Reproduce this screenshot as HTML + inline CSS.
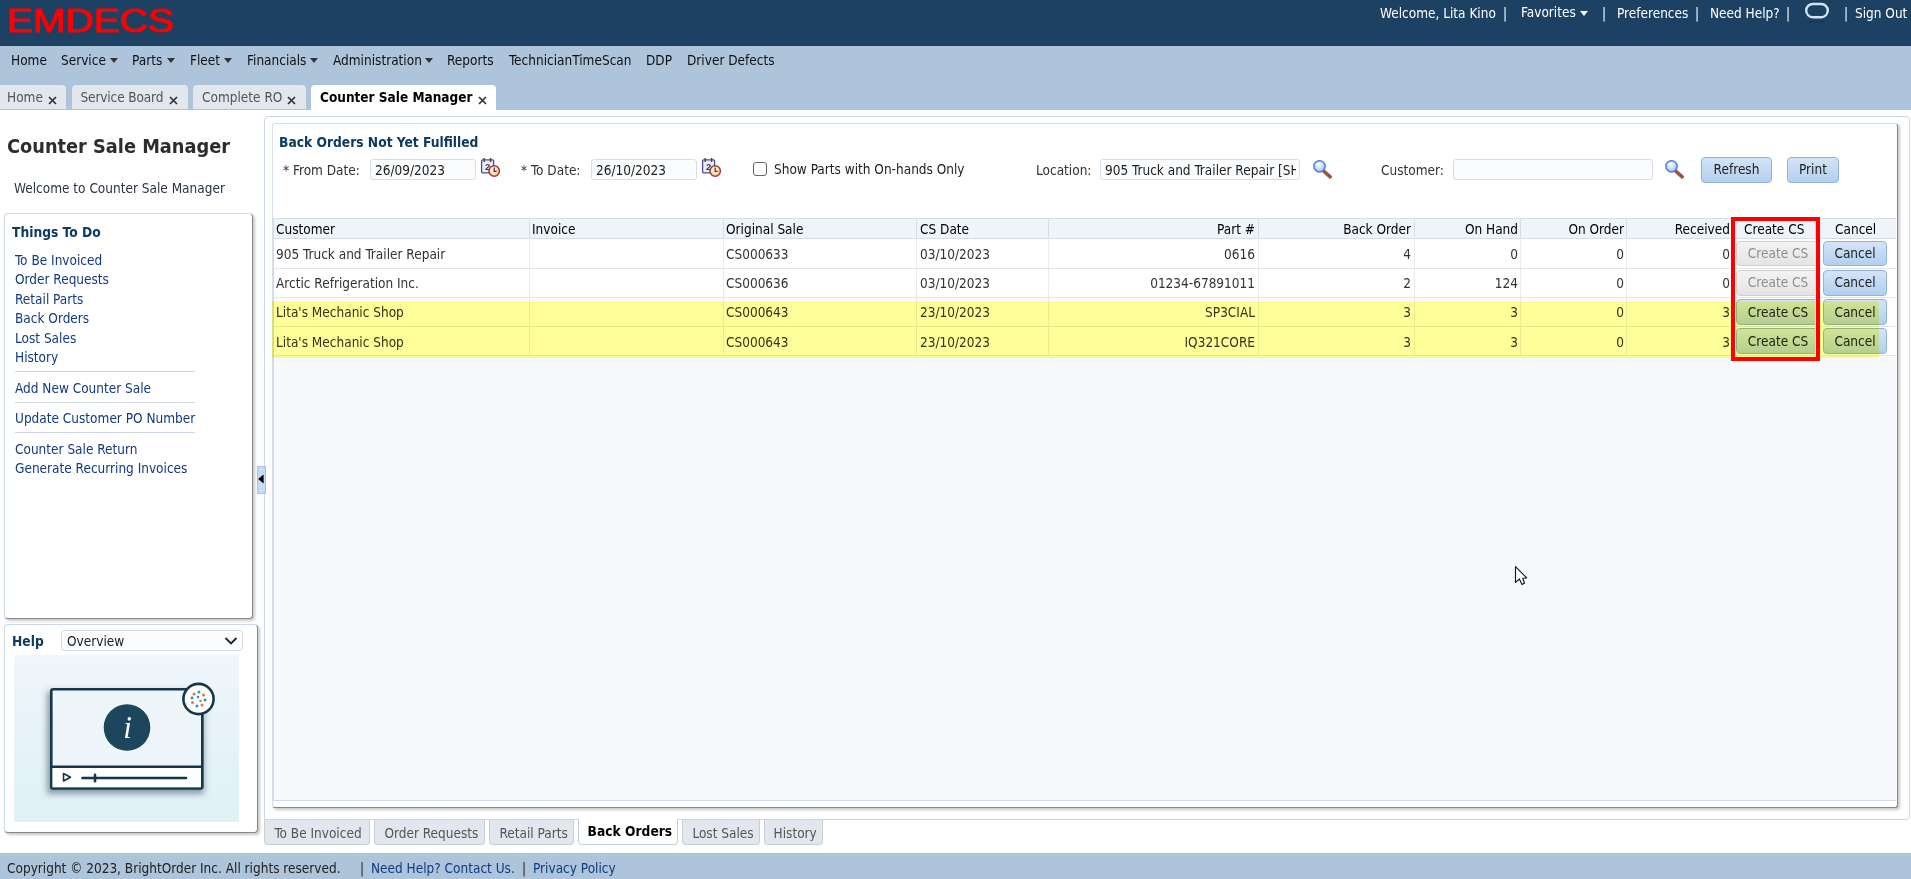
<!DOCTYPE html>
<html lang="en">
<head>
<meta charset="utf-8">
<title>Counter Sale Manager</title>
<style>
html,body{margin:0;padding:0}
body{width:1911px;height:879px;position:relative;overflow:hidden;background:#fff;
 font-family:"DejaVu Sans Condensed","Liberation Sans",sans-serif;font-size:13.5px;color:#222;line-height:16px}
.a{position:absolute}
.t{position:absolute;white-space:nowrap;line-height:16px}
.b{font-weight:bold}
.w{color:#fff}
.lnk{color:#123a82}
.caret{position:absolute;width:0;height:0;border-left:4.5px solid transparent;border-right:4.5px solid transparent;border-top:5px solid #333}
.tab{position:absolute;top:85px;height:24px;background:#e1e7ec;border-radius:4px 4px 0 0;color:#555}
.tab.act{background:#fff;color:#000;font-weight:bold;height:25px}
.x{position:absolute;top:11px;width:9px;height:9px}
.inp{position:absolute;top:159px;height:19px;border:1px solid #d5dee8;border-radius:3px;background:#fafcfe;overflow:hidden}
.btn{position:absolute;box-sizing:border-box;border:1px solid #8fb3dc;border-radius:4px;background:linear-gradient(#d3e4f8,#b3cfee);color:#222;text-align:center}
.btn.dis{border-color:#cfcfcf;background:linear-gradient(#f3f3f3,#e4e4e4);color:#8f8f8f}
.hd{position:absolute;top:219px;height:19px;border-left:1px solid #d3dbe6}
.cl{position:absolute;width:1px;background:#ebecef}
.rl{position:absolute;left:274px;width:1622px;height:1px;background:#e3e7ed}
.btab{position:absolute;top:820px;height:25px;box-sizing:border-box;border:1px solid #c3d0de;border-top:none;border-radius:0 0 4px 4px;background:#e1e7ec;color:#555}
</style>
</head>
<body>
<!-- header -->
<div class="a" style="left:0;top:0;width:1911px;height:46px;background:#1c4163"></div>
<svg class="a" style="left:0;top:0" width="200" height="46"><text x="7" y="32.3" font-family="Liberation Sans, sans-serif" font-size="34" fill="#ff0000" stroke="#ff0000" stroke-width="1.1" stroke-linejoin="round" textLength="167" lengthAdjust="spacingAndGlyphs">EMDECS</text></svg>
<div class="t w" style="left:1380px;top:5px">Welcome, Lita Kino</div>
<div class="t w" style="left:1503px;top:5px">|</div>
<div class="t w" style="left:1521px;top:4px">Favorites</div>
<div class="caret" style="left:1580px;top:11px;border-top-color:#fff"></div>
<div class="t w" style="left:1602px;top:5px">|</div>
<div class="t w" style="left:1617px;top:5px">Preferences</div>
<div class="t w" style="left:1695px;top:5px">|</div>
<div class="t w" style="left:1710px;top:5px">Need Help?</div>
<div class="t w" style="left:1786px;top:5px">|</div>
<svg class="a" style="left:1800px;top:0" width="34" height="28"><path d="M9 22.5 L11 21.5 H23 L25 22.5" fill="none" stroke="#183853" stroke-width="2"/><rect x="6.2" y="4" width="21.6" height="13.2" rx="6.6" ry="6.6" fill="none" stroke="#d3e3f6" stroke-width="2.4"/></svg>
<div class="t w" style="left:1844px;top:5px">|</div>
<div class="t w" style="left:1855px;top:5px">Sign Out</div>

<!-- nav -->
<div class="a" style="left:0;top:46px;width:1911px;height:64px;background:#aec4da"></div>
<div class="t" style="left:11px;top:52px;color:#111">Home</div>
<div class="t" style="left:61px;top:52px;color:#111">Service</div><div class="caret" style="left:110px;top:58px"></div>
<div class="t" style="left:132px;top:52px;color:#111">Parts</div><div class="caret" style="left:167px;top:58px"></div>
<div class="t" style="left:190px;top:52px;color:#111">Fleet</div><div class="caret" style="left:224px;top:58px"></div>
<div class="t" style="left:247px;top:52px;color:#111">Financials</div><div class="caret" style="left:310px;top:58px"></div>
<div class="t" style="left:333px;top:52px;color:#111">Administration</div><div class="caret" style="left:425px;top:58px"></div>
<div class="t" style="left:447px;top:52px;color:#111">Reports</div>
<div class="t" style="left:509px;top:52px;color:#111">TechnicianTimeScan</div>
<div class="t" style="left:646px;top:52px;color:#111">DDP</div>
<div class="t" style="left:687px;top:52px;color:#111">Driver Defects</div>

<!-- top tabs -->
<div class="tab" style="left:-4px;width:70px"><span class="t" style="left:11px;top:4px">Home</span><svg class="x" style="left:52px" viewBox="0 0 9 9"><path d="M1 1L8 8M8 1L1 8" stroke="#333" stroke-width="1.75"/></svg></div>
<div class="tab" style="left:72px;width:116px"><span class="t" style="left:8.5px;top:4px;letter-spacing:-0.13px">Service Board</span><svg class="x" style="left:97px" viewBox="0 0 9 9"><path d="M1 1L8 8M8 1L1 8" stroke="#333" stroke-width="1.75"/></svg></div>
<div class="tab" style="left:193px;width:113px"><span class="t" style="left:9px;top:4px">Complete RO</span><svg class="x" style="left:94px" viewBox="0 0 9 9"><path d="M1 1L8 8M8 1L1 8" stroke="#333" stroke-width="1.75"/></svg></div>
<div class="tab act" style="left:311px;width:185px"><span class="t" style="left:9px;top:4px">Counter Sale Manager</span><svg class="x" style="left:167px" viewBox="0 0 9 9"><path d="M1 1L8 8M8 1L1 8" stroke="#333" stroke-width="1.75"/></svg></div>

<!-- left column -->
<div class="t b" style="left:7px;top:134.5px;font-size:19.75px;line-height:24px;color:#2d2d2d">Counter Sale Manager</div>
<div class="t" style="left:14px;top:180px;color:#2a3442">Welcome to Counter Sale Manager</div>

<div class="a" style="left:4px;top:213px;width:247px;height:404px;border:1px solid;border-color:#cdd8e5 #82888f #82888f #cdd8e5;border-radius:4px;box-shadow:2px 2px 3px rgba(0,0,0,.22);background:#fff"></div>
<div class="t b" style="left:12px;top:224px;color:#0c3a62;font-size:13.7px">Things To Do</div>
<div class="t lnk" style="left:15px;top:252px">To Be Invoiced</div>
<div class="t lnk" style="left:15px;top:271px">Order Requests</div>
<div class="t lnk" style="left:15px;top:291px">Retail Parts</div>
<div class="t lnk" style="left:15px;top:310px">Back Orders</div>
<div class="t lnk" style="left:15px;top:330px">Lost Sales</div>
<div class="t lnk" style="left:15px;top:349px">History</div>
<div class="a" style="left:15px;top:371px;width:180px;height:1px;background:#cdd8e4"></div>
<div class="t lnk" style="left:15px;top:380px">Add New Counter Sale</div>
<div class="a" style="left:15px;top:402px;width:180px;height:1px;background:#cdd8e4"></div>
<div class="t lnk" style="left:15px;top:410px">Update Customer PO Number</div>
<div class="a" style="left:15px;top:432px;width:180px;height:1px;background:#cdd8e4"></div>
<div class="t lnk" style="left:15px;top:441px">Counter Sale Return</div>
<div class="t lnk" style="left:15px;top:460px">Generate Recurring Invoices</div>

<!-- help panel -->
<div class="a" style="left:4px;top:624px;width:252px;height:207px;border:1px solid;border-color:#cdd8e5 #82888f #82888f #cdd8e5;border-radius:4px;box-shadow:2px 2px 3px rgba(0,0,0,.22);background:#fff"></div>
<div class="t b" style="left:12px;top:633px;color:#0c3a62;font-size:13.7px">Help</div>
<div class="a" style="left:61px;top:630px;width:180px;height:19px;border:1px solid #d5dee8;border-radius:3px;background:#fafcfe"></div>
<div class="t" style="left:67px;top:633px;color:#222">Overview</div>
<svg class="a" style="left:224px;top:636px" width="14" height="10"><path d="M1.5 2L7 7.5L12.5 2" fill="none" stroke="#222" stroke-width="1.8"/></svg>
<div class="a" style="left:14px;top:655px;width:225px;height:167px;background:linear-gradient(#f0f6fb,#e8f3f9 40%,#dff1f7)"></div>
<svg class="a" style="left:14px;top:655px" width="225" height="167">
 <defs><filter id="sh" x="-20%" y="-20%" width="140%" height="140%"><feGaussianBlur stdDeviation="3.2"/></filter></defs>
 <rect x="33" y="36" width="157" height="103" fill="#345" opacity=".5" filter="url(#sh)"/>
 <rect x="37.3" y="34.3" width="151" height="99.2" rx="2" fill="#eef6fa" stroke="#15374c" stroke-width="2.6"/>
 <rect x="38.6" y="112" width="148.4" height="20.2" fill="#fff"/>
 <path d="M37.3 111.8H188.3" stroke="#15374c" stroke-width="2.6"/>
 <path d="M49.5 118.5V126L56.5 122.2Z" fill="#fff" stroke="#15374c" stroke-width="1.6" stroke-linejoin="round"/>
 <path d="M68.5 123H172" stroke="#15374c" stroke-width="2.6" stroke-linecap="round"/>
 <path d="M81 119.8V126.2" stroke="#15374c" stroke-width="2.6" stroke-linecap="round"/>
 <circle cx="113" cy="72.5" r="23.3" fill="#1b465c"/>
 <text x="113.5" y="82.5" text-anchor="middle" font-family="Liberation Serif, DejaVu Serif, serif" font-style="italic" font-size="31" fill="#fff">i</text>
 <circle cx="184.5" cy="44" r="15.1" fill="#fff" stroke="#15374c" stroke-width="2.6"/>
 <g>
  <circle cx="180" cy="39" r="1.5" fill="#e8743b"/><circle cx="185" cy="37" r="1.5" fill="#2a8fd4"/><circle cx="189.5" cy="40" r="1.5" fill="#e8743b"/>
  <circle cx="191" cy="45" r="1.5" fill="#2a8fd4"/><circle cx="188" cy="50" r="1.5" fill="#e8743b"/><circle cx="183" cy="51" r="1.5" fill="#2a8fd4"/>
  <circle cx="178.5" cy="47.5" r="1.5" fill="#e8743b"/><circle cx="178" cy="43" r="1.4" fill="#2a8fd4"/><circle cx="184" cy="42" r="1.3" fill="#2a8fd4"/><circle cx="186.5" cy="46" r="1.3" fill="#e8743b"/>
 </g>
</svg>

<!-- splitter -->
<div class="a" style="left:257px;top:466px;width:7px;height:26px;background:#c5dcf5;border:1px solid #a5c2e4;z-index:3"></div>
<svg class="a" style="left:257px;top:473px;z-index:4" width="9" height="12"><path d="M6.6 1.4V10.4L1.1 5.9Z" fill="#000"/></svg>

<!-- main outer panel -->
<div class="a" style="left:264px;top:116px;width:1644px;height:702px;border:1px solid #cdd8e5;border-radius:4px 4px 4px 0;background:#fff"></div>
<!-- inner panel -->
<div class="a" style="left:272px;top:123px;width:1624px;height:683px;border:1px solid;border-color:#d6dfea #82888f #82888f #d6dfea;border-radius:3px;box-shadow:2px 2px 3px rgba(0,0,0,.22);background:#fff"></div>
<div class="t b" style="left:279px;top:134px;color:#0c3a62;font-size:13.7px">Back Orders Not Yet Fulfilled</div>

<div class="t" style="left:283px;top:162px;color:#333">* From Date:</div>
<div class="inp" style="left:370px;width:104px"><span class="t" style="left:4px;top:2px">26/09/2023</span></div>
<div class="t" style="left:521px;top:162px;color:#333">* To Date:</div>
<div class="inp" style="left:591px;width:104px"><span class="t" style="left:4px;top:2px">26/10/2023</span></div>
<div class="a" style="left:753px;top:162px;width:12px;height:12px;border:1.5px solid #666;border-radius:3px;background:#fff"></div>
<div class="t" style="left:774px;top:161px;color:#222">Show Parts with On-hands Only</div>
<div class="t" style="left:1036px;top:162px;color:#333">Location:</div>
<div class="inp" style="left:1100px;width:198px"><span class="t" style="left:4px;top:2px;width:191px;overflow:hidden">905 Truck and Trailer Repair [SH</span></div>
<div class="t" style="left:1381px;top:162px;color:#333">Customer:</div>
<div class="inp" style="left:1453px;width:198px"></div>
<div class="btn" style="left:1701px;top:157px;width:71px;height:26px;line-height:22px">Refresh</div>
<div class="btn" style="left:1787px;top:157px;width:52px;height:26px;line-height:22px">Print</div>

<!-- table -->
<div class="a" style="left:273px;top:218px;width:1623px;height:583px;background:#f7f9fd;border-bottom:1px solid #cfdbe8;box-sizing:border-box"></div>
<div class="a" style="left:273px;top:218px;width:1623px;height:19px;background:#eff3fa;border-top:1px solid #d5dee7;border-bottom:1px solid #d5dee7"></div>
<div class="a" style="left:273px;top:239px;width:1623px;height:117px;background:#fff"></div>
<div class="a" style="left:273px;top:218px;width:1px;height:583px;background:#cdd8e8"></div>

<div class="cl" style="left:529px;top:219px;height:137px"></div>
<div class="cl" style="left:529px;top:219px;height:19px;background:#d5dee7"></div>
<div class="cl" style="left:723px;top:219px;height:137px"></div>
<div class="cl" style="left:723px;top:219px;height:19px;background:#d5dee7"></div>
<div class="cl" style="left:916px;top:219px;height:137px"></div>
<div class="cl" style="left:916px;top:219px;height:19px;background:#d5dee7"></div>
<div class="cl" style="left:1048px;top:219px;height:137px"></div>
<div class="cl" style="left:1048px;top:219px;height:19px;background:#d5dee7"></div>
<div class="cl" style="left:1258px;top:219px;height:137px"></div>
<div class="cl" style="left:1258px;top:219px;height:19px;background:#d5dee7"></div>
<div class="cl" style="left:1414px;top:219px;height:137px"></div>
<div class="cl" style="left:1414px;top:219px;height:19px;background:#d5dee7"></div>
<div class="cl" style="left:1520px;top:219px;height:137px"></div>
<div class="cl" style="left:1520px;top:219px;height:19px;background:#d5dee7"></div>
<div class="cl" style="left:1626px;top:219px;height:137px"></div>
<div class="cl" style="left:1626px;top:219px;height:19px;background:#d5dee7"></div>
<div class="cl" style="left:1731px;top:219px;height:137px"></div>
<div class="cl" style="left:1731px;top:219px;height:19px;background:#d5dee7"></div>
<div class="cl" style="left:1815px;top:219px;height:137px"></div>
<div class="cl" style="left:1815px;top:219px;height:19px;background:#d5dee7"></div>
<div class="rl" style="top:268px"></div>
<div class="rl" style="top:297px"></div>
<div class="rl" style="top:326px"></div>
<div class="rl" style="top:355px"></div>
<div class="t" style="left:276px;top:221px;color:#000;">Customer</div>
<div class="t" style="left:532px;top:221px;color:#000;">Invoice</div>
<div class="t" style="left:726px;top:221px;color:#000;">Original Sale</div>
<div class="t" style="left:920px;top:221px;color:#000;">CS Date</div>
<div class="t" style="right:656px;top:221px;color:#000;">Part #</div>
<div class="t" style="right:500px;top:221px;color:#000;">Back Order</div>
<div class="t" style="right:393px;top:221px;color:#000;">On Hand</div>
<div class="t" style="right:287px;top:221px;color:#000;">On Order</div>
<div class="t" style="right:181px;top:221px;color:#000;">Received</div>
<div class="t" style="left:1744px;top:221px;color:#000;">Create CS</div>
<div class="t" style="left:1835px;top:221px;color:#000;">Cancel</div>
<div class="t" style="left:276px;top:246.0px;color:#333;">905 Truck and Trailer Repair</div>
<div class="t" style="left:726px;top:246.0px;color:#333;">CS000633</div>
<div class="t" style="left:920px;top:246.0px;color:#333;">03/10/2023</div>
<div class="t" style="right:656px;top:246.0px;color:#333;">0616</div>
<div class="t" style="right:500px;top:246.0px;color:#333;">4</div>
<div class="t" style="right:393px;top:246.0px;color:#333;">0</div>
<div class="t" style="right:287px;top:246.0px;color:#333;">0</div>
<div class="t" style="right:181px;top:246.0px;color:#333;">0</div>
<div class="a" style="left:1732px;top:240.2px;width:83px;height:28px;overflow:hidden"><div class="btn dis" style="left:4px;top:1px;width:84px;height:25px;line-height:23px">Create CS</div></div>
<div class="btn" style="left:1823px;top:241.2px;width:64px;height:25px;line-height:23px">Cancel</div>
<div class="t" style="left:276px;top:275.3px;color:#333;">Arctic Refrigeration Inc.</div>
<div class="t" style="left:726px;top:275.3px;color:#333;">CS000636</div>
<div class="t" style="left:920px;top:275.3px;color:#333;">03/10/2023</div>
<div class="t" style="right:656px;top:275.3px;color:#333;">01234-67891011</div>
<div class="t" style="right:500px;top:275.3px;color:#333;">2</div>
<div class="t" style="right:393px;top:275.3px;color:#333;">124</div>
<div class="t" style="right:287px;top:275.3px;color:#333;">0</div>
<div class="t" style="right:181px;top:275.3px;color:#333;">0</div>
<div class="a" style="left:1732px;top:269px;width:83px;height:29px;overflow:hidden"><div class="btn dis" style="left:4px;top:1px;width:84px;height:26px;line-height:23px">Create CS</div></div>
<div class="btn" style="left:1823px;top:270px;width:64px;height:26px;line-height:23px">Cancel</div>
<div class="t" style="left:276px;top:303.8px;color:#333;">Lita's Mechanic Shop</div>
<div class="t" style="left:726px;top:303.8px;color:#333;">CS000643</div>
<div class="t" style="left:920px;top:303.8px;color:#333;">23/10/2023</div>
<div class="t" style="right:656px;top:303.8px;color:#333;">SP3CIAL</div>
<div class="t" style="right:500px;top:303.8px;color:#333;">3</div>
<div class="t" style="right:393px;top:303.8px;color:#333;">3</div>
<div class="t" style="right:287px;top:303.8px;color:#333;">0</div>
<div class="t" style="right:181px;top:303.8px;color:#333;">3</div>
<div class="a" style="left:1732px;top:298px;width:83px;height:29px;overflow:hidden"><div class="btn" style="left:4px;top:1px;width:84px;height:26px;line-height:24px">Create CS</div></div>
<div class="btn" style="left:1823px;top:299px;width:64px;height:26px;line-height:24px">Cancel</div>
<div class="t" style="left:276px;top:333.9px;color:#333;">Lita's Mechanic Shop</div>
<div class="t" style="left:726px;top:333.9px;color:#333;">CS000643</div>
<div class="t" style="left:920px;top:333.9px;color:#333;">23/10/2023</div>
<div class="t" style="right:656px;top:333.9px;color:#333;">IQ321CORE</div>
<div class="t" style="right:500px;top:333.9px;color:#333;">3</div>
<div class="t" style="right:393px;top:333.9px;color:#333;">3</div>
<div class="t" style="right:287px;top:333.9px;color:#333;">0</div>
<div class="t" style="right:181px;top:333.9px;color:#333;">3</div>
<div class="a" style="left:1732px;top:327px;width:83px;height:29px;overflow:hidden"><div class="btn" style="left:4px;top:1px;width:84px;height:26px;line-height:25px">Create CS</div></div>
<div class="btn" style="left:1823px;top:328px;width:64px;height:26px;line-height:25px">Cancel</div>
<div class="a" style="left:271.5px;top:301px;width:1607.5px;height:57px;background:#ffff99;mix-blend-mode:multiply"></div>
<div class="a" style="left:1731px;top:217px;width:89px;height:144px;box-sizing:border-box;border:4px solid #fe0000"></div>
<!-- bottom tabs -->
<div class="btab" style="left:264.4px;width:105.6px"><span class="t" style="left:9px;top:5px">To Be Invoiced</span></div>
<div class="btab" style="left:374.4px;width:110.2px"><span class="t" style="left:9px;top:5px">Order Requests</span></div>
<div class="btab" style="left:489.4px;width:84.4px"><span class="t" style="left:9px;top:5px">Retail Parts</span></div>
<div class="btab" style="left:577.6px;width:100.0px;top:819px;height:26px;background:#fff;color:#000;font-weight:bold;font-size:13.7px"><span class="t" style="left:9px;top:4px">Back Orders</span></div>
<div class="btab" style="left:682.4px;width:77.2px"><span class="t" style="left:9px;top:5px">Lost Sales</span></div>
<div class="btab" style="left:763.6px;width:59.0px"><span class="t" style="left:9px;top:5px">History</span></div>
<!-- footer -->
<div class="a" style="left:0;top:853px;width:1911px;height:26px;background:#aec4da"></div>
<div class="t" style="left:7px;top:860px;color:#222;">Copyright © 2023, BrightOrder Inc. All rights reserved.</div>
<div class="t" style="left:360px;top:860px;color:#222;">|</div>
<div class="t lnk" style="left:371px;top:860px;">Need Help? Contact Us.</div>
<div class="t" style="left:522px;top:860px;color:#222;">|</div>
<div class="t lnk" style="left:533px;top:860px;">Privacy Policy</div>
<svg class="a" style="left:480px;top:157px" width="22" height="22" viewBox="0 0 22 22">
<defs><radialGradient id="cg1" cx=".4" cy=".35" r=".7"><stop offset="0" stop-color="#fff"/><stop offset="1" stop-color="#f9c98a"/></radialGradient></defs>
<rect x="1.6" y="2.8" width="12" height="13" rx="1" fill="#ececfa" stroke="#4c4c90" stroke-width="1.3"/>
<path d="M4.2 1V5M10.6 1V5" stroke="#444" stroke-width="1.4"/>
<text x="7.6" y="12.5" text-anchor="middle" font-family="Liberation Sans, sans-serif" font-size="9.5" font-weight="bold" fill="#3a3a3a">2</text>
<circle cx="14.2" cy="14" r="5.2" fill="url(#cg1)" stroke="#a93434" stroke-width="1.5"/>
<path d="M14.2 10.6V14.4H16.8" fill="none" stroke="#4a3a34" stroke-width="1.3"/>
</svg>
<svg class="a" style="left:701px;top:157px" width="22" height="22" viewBox="0 0 22 22">
<defs><radialGradient id="cg2" cx=".4" cy=".35" r=".7"><stop offset="0" stop-color="#fff"/><stop offset="1" stop-color="#f9c98a"/></radialGradient></defs>
<rect x="1.6" y="2.8" width="12" height="13" rx="1" fill="#ececfa" stroke="#4c4c90" stroke-width="1.3"/>
<path d="M4.2 1V5M10.6 1V5" stroke="#444" stroke-width="1.4"/>
<text x="7.6" y="12.5" text-anchor="middle" font-family="Liberation Sans, sans-serif" font-size="9.5" font-weight="bold" fill="#3a3a3a">2</text>
<circle cx="14.2" cy="14" r="5.2" fill="url(#cg2)" stroke="#a93434" stroke-width="1.5"/>
<path d="M14.2 10.6V14.4H16.8" fill="none" stroke="#4a3a34" stroke-width="1.3"/>
</svg>
<svg class="a" style="left:1312px;top:158px" width="24" height="24" viewBox="0 0 24 24">
<defs><radialGradient id="mg1" cx=".42" cy=".35" r=".65"><stop offset="0" stop-color="#fff"/><stop offset="1" stop-color="#9cc6f7"/></radialGradient></defs>
<path d="M11.6 13L18.2 18.8" stroke="#9b5439" stroke-width="3.6" stroke-linecap="round"/>
<circle cx="7.5" cy="8.3" r="5.6" fill="url(#mg1)" stroke="#4c80cb" stroke-width="1.5"/>
</svg>
<svg class="a" style="left:1663.5px;top:158px" width="24" height="24" viewBox="0 0 24 24">
<defs><radialGradient id="mg2" cx=".42" cy=".35" r=".65"><stop offset="0" stop-color="#fff"/><stop offset="1" stop-color="#9cc6f7"/></radialGradient></defs>
<path d="M11.6 13L18.2 18.8" stroke="#9b5439" stroke-width="3.6" stroke-linecap="round"/>
<circle cx="7.5" cy="8.3" r="5.6" fill="url(#mg2)" stroke="#4c80cb" stroke-width="1.5"/>
</svg>
<svg class="a" style="left:1514px;top:565px" width="15" height="22" viewBox="0 0 15 22"><path d="M1.5 1.6V17.4L5.4 14L8 19.4L10.5 18.3L8.8 13.3L12.7 12.9Z" fill="#fff" stroke="#15151f" stroke-width="1.15" stroke-linejoin="round"/></svg>
</body>
</html>
